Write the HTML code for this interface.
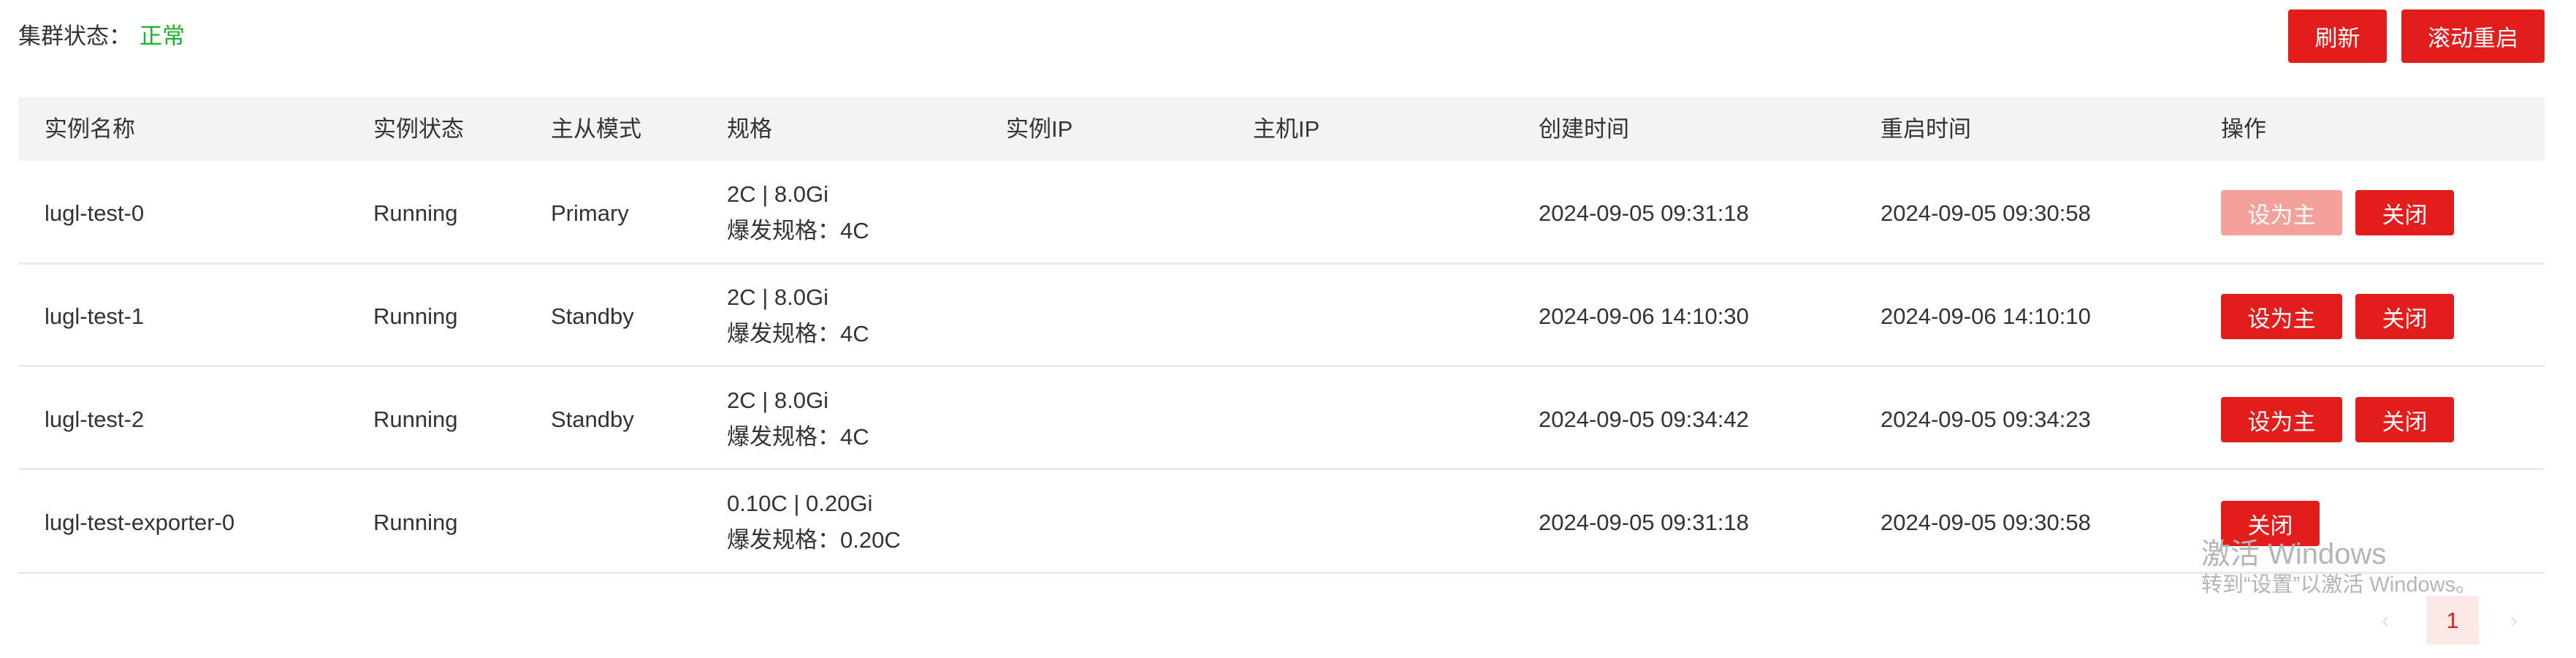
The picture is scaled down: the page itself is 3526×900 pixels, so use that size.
<!DOCTYPE html>
<html><head><meta charset="utf-8"><style>
*{margin:0;padding:0;box-sizing:border-box}
body{width:3526px;height:900px;background:#fff;position:relative;overflow:hidden;font-family:"Liberation Sans","Noto Sans CJK SC",sans-serif;font-size:31px;color:#333}
.a{position:absolute;white-space:nowrap;line-height:1}
.btn{position:absolute;background:#e31c1c;color:#fff;border-radius:4px;font-size:31px;display:flex;align-items:center;justify-content:center}
.hd{position:absolute;left:25px;top:133px;width:3458px;height:87px;background:#f3f3f6}
.ln{position:absolute;left:25px;width:3458px;height:3px;background:#ebebeb}
</style></head><body>
<div class="a" style="left:25px;top:34px">集群状态：</div>
<div class="a" style="left:191px;top:34px;color:#18b32a">正常</div>
<div class="btn" style="left:3132px;top:13px;width:135px;height:73px">刷新</div>
<div class="btn" style="left:3287px;top:13px;width:196px;height:73px">滚动重启</div>
<div class="hd"></div>
<div class="a" style="left:61px;top:161px">实例名称</div>
<div class="a" style="left:511px;top:161px">实例状态</div>
<div class="a" style="left:754px;top:161px">主从模式</div>
<div class="a" style="left:995px;top:161px">规格</div>
<div class="a" style="left:1377px;top:161px">实例IP</div>
<div class="a" style="left:1715px;top:161px">主机IP</div>
<div class="a" style="left:2106px;top:161px">创建时间</div>
<div class="a" style="left:2574px;top:161px">重启时间</div>
<div class="a" style="left:3040px;top:161px">操作</div>

<div class="ln" style="top:359px"></div>
<div class="ln" style="top:499px"></div>
<div class="ln" style="top:640px"></div>
<div class="ln" style="top:782px"></div>

<!-- row 1 -->
<div class="a" style="left:61px;top:276px">lugl-test-0</div>
<div class="a" style="left:511px;top:276px">Running</div>
<div class="a" style="left:754px;top:276px">Primary</div>
<div class="a" style="left:995px;top:250px">2C | 8.0Gi</div>
<div class="a" style="left:995px;top:300px">爆发规格：4C</div>
<div class="a" style="left:2106px;top:276px">2024-09-05 09:31:18</div>
<div class="a" style="left:2574px;top:276px">2024-09-05 09:30:58</div>
<div class="btn" style="left:3040px;top:260px;width:166px;height:62px;background:#f4a09b">设为主</div>
<div class="btn" style="left:3224px;top:260px;width:135px;height:62px">关闭</div>
<!-- row 2 -->
<div class="a" style="left:61px;top:417px">lugl-test-1</div>
<div class="a" style="left:511px;top:417px">Running</div>
<div class="a" style="left:754px;top:417px">Standby</div>
<div class="a" style="left:995px;top:391px">2C | 8.0Gi</div>
<div class="a" style="left:995px;top:441px">爆发规格：4C</div>
<div class="a" style="left:2106px;top:417px">2024-09-06 14:10:30</div>
<div class="a" style="left:2574px;top:417px">2024-09-06 14:10:10</div>
<div class="btn" style="left:3040px;top:402px;width:166px;height:62px">设为主</div>
<div class="btn" style="left:3224px;top:402px;width:135px;height:62px">关闭</div>
<!-- row 3 -->
<div class="a" style="left:61px;top:558px">lugl-test-2</div>
<div class="a" style="left:511px;top:558px">Running</div>
<div class="a" style="left:754px;top:558px">Standby</div>
<div class="a" style="left:995px;top:532px">2C | 8.0Gi</div>
<div class="a" style="left:995px;top:582px">爆发规格：4C</div>
<div class="a" style="left:2106px;top:558px">2024-09-05 09:34:42</div>
<div class="a" style="left:2574px;top:558px">2024-09-05 09:34:23</div>
<div class="btn" style="left:3040px;top:543px;width:166px;height:62px">设为主</div>
<div class="btn" style="left:3224px;top:543px;width:135px;height:62px">关闭</div>
<!-- row 4 -->
<div class="a" style="left:61px;top:699px">lugl-test-exporter-0</div>
<div class="a" style="left:511px;top:699px">Running</div>
<div class="a" style="left:995px;top:673px">0.10C | 0.20Gi</div>
<div class="a" style="left:995px;top:723px">爆发规格：0.20C</div>
<div class="a" style="left:2106px;top:699px">2024-09-05 09:31:18</div>
<div class="a" style="left:2574px;top:699px">2024-09-05 09:30:58</div>
<div class="btn" style="left:3040px;top:685px;width:135px;height:62px">关闭</div>

<div class="a" style="left:3013px;top:738px;font-size:40px;color:#b5b5b5">激活 Windows</div>
<div class="a" style="left:3013px;top:786px;font-size:29px;color:#b5b5b5">转到“设置”以激活 Windows。</div>

<div class="a" style="left:3260px;top:834px;color:#e0e0e0;font-size:30px">‹</div>
<div style="position:absolute;left:3321px;top:815px;width:72px;height:67px;background:#fde8e8;border-radius:4px;color:#e31c1c;display:flex;align-items:center;justify-content:center;font-size:31px">1</div>
<div class="a" style="left:3436px;top:834px;color:#e0e0e0;font-size:30px">›</div>
</body></html>
